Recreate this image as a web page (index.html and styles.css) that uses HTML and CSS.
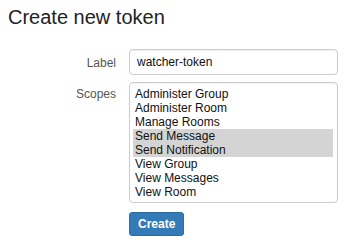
FILE: index.html
```html
<!DOCTYPE html>
<html lang="en">
<head>
<meta charset="utf-8">
<title>Create new token</title>
<link rel="stylesheet" href="styles.css">
</head>
<body>
<div class="page">
  <h1 class="title">Create new token</h1>
  <form class="form">
    <label class="field-label" for="label">Label</label>
    <input class="text-input" id="label" type="text" value="watcher-token">
    <span class="field-label field-label--list">Scopes</span>
    <ul class="listbox" role="listbox" aria-multiselectable="true">
      <li class="option" role="option">Administer Group</li>
      <li class="option" role="option">Administer Room</li>
      <li class="option" role="option">Manage Rooms</li>
      <li class="option option--selected" role="option" aria-selected="true">Send Message</li>
      <li class="option option--selected" role="option" aria-selected="true">Send Notification</li>
      <li class="option" role="option">View Group</li>
      <li class="option" role="option">View Messages</li>
      <li class="option" role="option">View Room</li>
    </ul>
    <span class="spacer"></span>
    <div class="actions"><button class="btn-primary" type="button">Create</button></div>
  </form>
</div>
</body>
</html>
```

FILE: styles.css
```css
html, body {
  margin: 0;
  padding: 0;
  background: #ffffff;
}

body {
  font-family: "Liberation Sans", Arial, Helvetica, sans-serif;
  color: #222222;
}

.page {
  padding: 6px 8px 0 8px;
}

.title {
  margin: 0;
  font-size: 20px;
  line-height: 22px;
  font-weight: normal;
  color: #222222;
}

.form {
  margin-top: 21px;
  display: grid;
  grid-template-columns: 108px 209px;
  column-gap: 13px;
  row-gap: 7px;
  align-items: start;
}

.field-label {
  text-align: right;
  font-size: 12px;
  line-height: 14px;
  color: #555555;
  padding-top: 7px;
}

.field-label--list {
  padding-top: 5px;
}

.text-input {
  box-sizing: border-box;
  width: 209px;
  height: 26px;
  margin: 0;
  padding: 5px 7px;
  border: 1px solid #cccccc;
  border-radius: 4px;
  box-shadow: inset 0 1px 1px rgba(0, 0, 0, 0.06);
  font-family: "Liberation Sans", Arial, Helvetica, sans-serif;
  font-size: 12px;
  line-height: 14px;
  color: #111111;
  background: #ffffff;
}

.listbox {
  box-sizing: border-box;
  width: 209px;
  margin: 0;
  padding: 4px 4px 3px 3px;
  list-style: none;
  border: 1px solid #cccccc;
  border-radius: 4px;
  box-shadow: inset 0 1px 1px rgba(0, 0, 0, 0.06);
  background: #ffffff;
}

.option {
  font-size: 12px;
  line-height: 14px;
  height: 14px;
  padding: 0 0 0 2px;
  color: #111111;
  white-space: nowrap;
}

.option--selected {
  background: #d4d4d4;
}

.actions {
  padding-top: 2px;
}

.btn-primary {
  box-sizing: border-box;
  height: 24px;
  margin: 0;
  padding: 4px 8px;
  border: 1px solid #2e6da4;
  border-radius: 3px;
  background: #337ab7;
  color: #ffffff;
  font-family: "Liberation Sans", Arial, Helvetica, sans-serif;
  font-size: 12px;
  line-height: 14px;
  font-weight: bold;
}
```
